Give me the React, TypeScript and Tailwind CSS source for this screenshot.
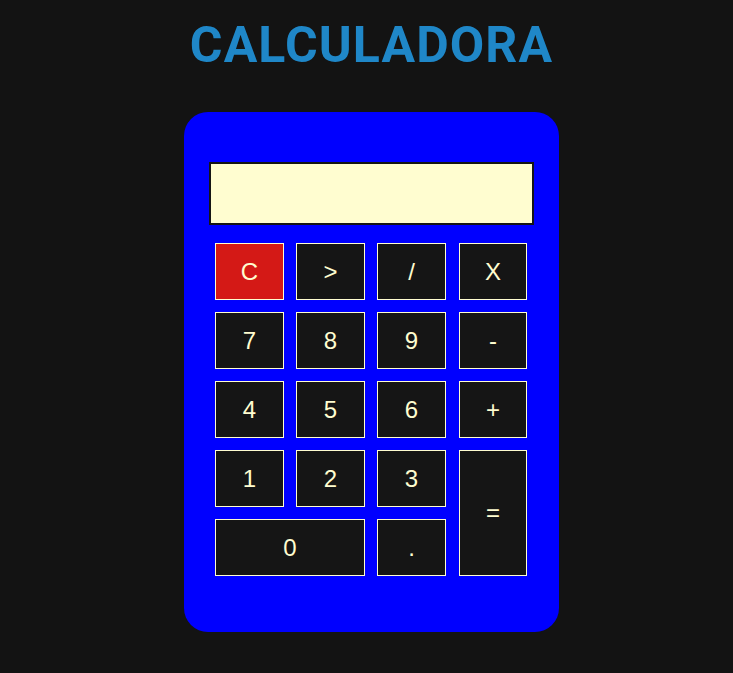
import React from "react";

const Btn = ({ label, className = "" }: { label: string; className?: string }) => (
  <button
    className={`border border-[#fffdd0] text-[#fffdd0] text-[24px] flex items-center justify-center ${className}`}
    style={{ fontFamily: '"Liberation Sans", Arial, sans-serif' }}
  >
    {label}
  </button>
);

export default function App() {
  return (
    <div className="min-h-[673px] w-full bg-[#131313] pl-[10px] flex flex-col items-center">
      <h1
        className="text-[50px] font-bold text-[#1f87c8] leading-none mt-[20px] tracking-[1.1px]"
        style={{ fontFamily: 'Roboto, "Liberation Sans", sans-serif' }}
      >
        CALCULADORA
      </h1>
      <div className="mt-[42px] w-[375px] h-[520px] bg-[#0000ff] rounded-[24px] px-[25px] pt-[50px]">
        <div className="h-[63px] w-full bg-[#fffdd0] border-2 border-[#151515]" />
        <div className="mt-[18px] px-[6px] grid grid-cols-[69px_69px_69px_69px] auto-rows-[57px] gap-y-[12px] gap-x-[12px]">
          <Btn label="C" className="bg-[#d41916]" />
          <Btn label=">" className="bg-[#151515]" />
          <Btn label="/" className="bg-[#151515]" />
          <Btn label="X" className="bg-[#151515] ml-[1px] w-[68px]" />
          <Btn label="7" className="bg-[#151515]" />
          <Btn label="8" className="bg-[#151515]" />
          <Btn label="9" className="bg-[#151515]" />
          <Btn label="-" className="bg-[#151515] ml-[1px] w-[68px]" />
          <Btn label="4" className="bg-[#151515]" />
          <Btn label="5" className="bg-[#151515]" />
          <Btn label="6" className="bg-[#151515]" />
          <Btn label="+" className="bg-[#151515] ml-[1px] w-[68px]" />
          <Btn label="1" className="bg-[#151515]" />
          <Btn label="2" className="bg-[#151515]" />
          <Btn label="3" className="bg-[#151515]" />
          <Btn label="=" className="bg-[#151515] row-span-2 ml-[1px] w-[68px]" />
          <Btn label="0" className="bg-[#151515] col-span-2" />
          <Btn label="." className="bg-[#151515]" />
        </div>
      </div>
    </div>
  );
}
